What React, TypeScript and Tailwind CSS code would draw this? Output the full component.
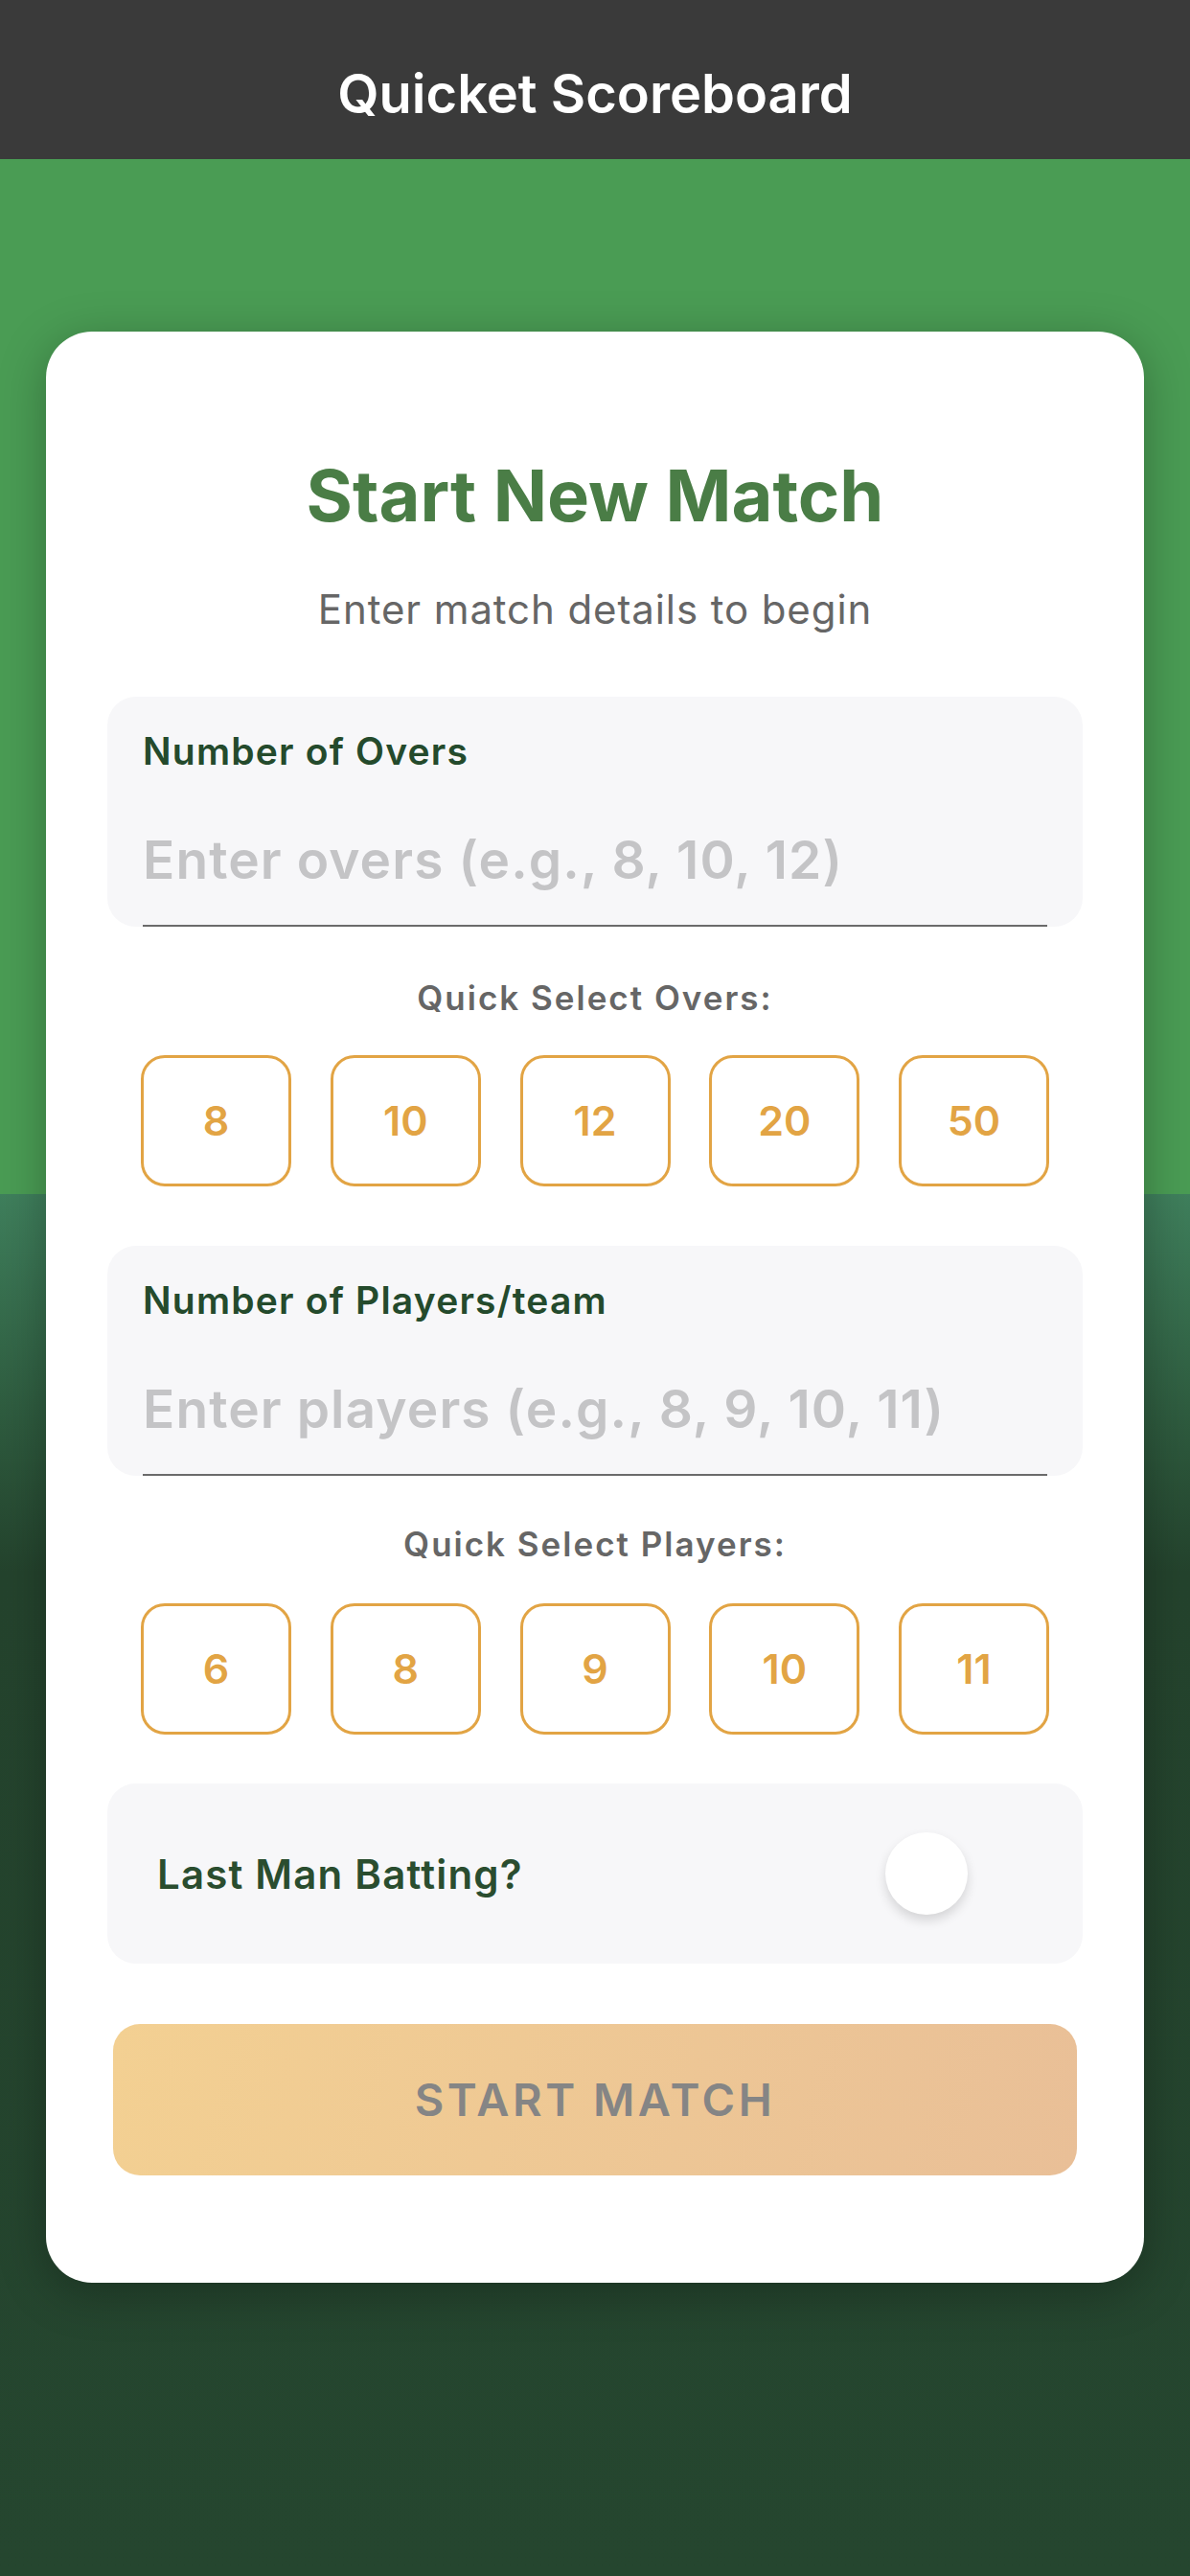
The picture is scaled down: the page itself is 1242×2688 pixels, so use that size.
import React from 'react'

const font = { fontFamily: 'Inter, "Noto Sans", sans-serif' }

const QuickButton: React.FC<{ value: number }> = ({ value }) => {
  return (
    <button className="w-[157px] h-[137px] rounded-[25px] border-[3px] border-[#e2a444] bg-white flex items-center justify-center text-[43px] font-semibold text-[#e2a444]">
      {value}
    </button>
  )
}

const InputBox: React.FC<{ label: string; placeholder: string; className?: string }> = ({
  label,
  placeholder,
  className,
}) => {
  return (
    <div className={`h-[240px] rounded-[30px] bg-[#f7f7f9] px-[37px] pt-[34px] flex flex-col ${className ?? ''}`}>
      <label className="text-[39px] leading-[46px] font-semibold tracking-[1.2px] text-[#244a2c]">{label}</label>
      <input
        readOnly
        placeholder={placeholder}
        className="mt-[22px] h-[138px] w-full bg-transparent border-b-2 border-[#6b6b6b] text-[55px] font-semibold tracking-[1.1px] outline-none placeholder:text-[#c4c4c6]"
      />
    </div>
  )
}

export default function App() {
  return (
    <div className="min-h-[2688px] w-full flex flex-col" style={font}>
      <header className="h-[166px] bg-[#3a3a3a] flex items-center justify-center pt-[29px]">
        <h1 className="text-[56px] font-semibold text-white">Quicket Scoreboard</h1>
      </header>

      <main className="flex-1 bg-[linear-gradient(180deg,#4a9c54_0px,#4a9c54_1080px,#3f7f5c_1080px,#2f5d40_1300px,#24432d_1474px,#25462f_100%)] pt-[180px] pb-[303px] px-[48px]">
        <div className="bg-white rounded-[48px] shadow-[0_10px_50px_rgba(0,0,0,0.28)] pt-[128px] pb-[112px] px-[64px] flex flex-col">
          <h2 className="text-center text-[74px] leading-[86px] font-bold text-[#4a7d46]">
            Start New Match
          </h2>
          <p className="mt-[51px] text-center text-[42px] leading-[50px] tracking-[0.9px] text-[#666666]">
            Enter match details to begin
          </p>

          <InputBox className="mt-[66px]" label="Number of Overs" placeholder="Enter overs (e.g., 8, 10, 12)" />
          <p className="mt-[53px] text-center text-[35px] leading-[42px] font-semibold tracking-[2px] text-[#666666]">
            Quick Select Overs:
          </p>
          <div className="mt-[39px] px-[35px] flex justify-between">
            {[8, 10, 12, 20, 50].map((n) => (
              <QuickButton key={n} value={n} />
            ))}
          </div>

          <InputBox
            className="mt-[62px]"
            label="Number of Players/team"
            placeholder="Enter players (e.g., 8, 9, 10, 11)"
          />
          <p className="mt-[50px] text-center text-[35px] leading-[42px] font-semibold tracking-[2px] text-[#666666]">
            Quick Select Players:
          </p>
          <div className="mt-[41px] px-[35px] flex justify-between">
            {[6, 8, 9, 10, 11].map((n) => (
              <QuickButton key={n} value={n} />
            ))}
          </div>

          <div className="mt-[51px] h-[188px] rounded-[30px] bg-[#f7f7f9] px-[52px] flex items-center justify-between">
            <span className="text-[42px] font-semibold tracking-[1.2px] text-[#2a4d2f]">Last Man Batting?</span>
            <div className="w-[154px] h-[90px] flex items-center">
              <div className="w-[86px] h-[86px] rounded-full bg-white shadow-[0_6px_12px_rgba(0,0,0,0.14)]" />
            </div>
          </div>

          <button className="mt-[63px] mx-[6px] h-[158px] rounded-[28px] bg-[linear-gradient(105deg,#f3d092,#e9bf97)] flex items-center justify-center text-[47px] font-semibold tracking-[3.5px] text-[#858585]">
            START MATCH
          </button>
        </div>
      </main>
    </div>
  )
}
